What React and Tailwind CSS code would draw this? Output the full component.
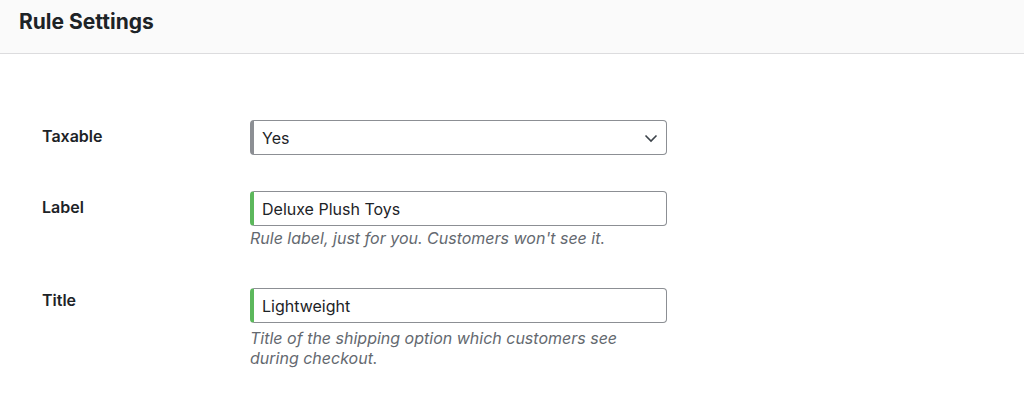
const font = { fontFamily: "Inter, 'Noto Sans', sans-serif" };

function Row({ label, labelPad, children }) {
  return (
    <div className="flex">
      <div className={`w-[208px] shrink-0 text-[16px] leading-6 font-semibold text-[#1d2327] ${labelPad}`}>
        {label}
      </div>
      <div className="w-[417px]">{children}</div>
    </div>
  );
}

function TextInput({ value }) {
  return (
    <div className="h-[35px] flex items-center rounded-[4px] border border-[#8c8f94] border-l-4 border-l-[#5cb85c] bg-white pl-2 text-[16px] text-[#1d2327]">
      {value}
    </div>
  );
}

export default function App() {
  return (
    <div className="w-[1024px] h-[419px] bg-white overflow-hidden" style={font}>
      <div className="h-[54px] bg-[#fafafa] border-b border-[#dcdcde] pl-[19px] pt-[8px]">
        <h2 className="text-[21px] leading-7 font-bold text-[#1d2327]">Rule Settings</h2>
      </div>

      <div className="pl-[42px] pt-[66px]">
        <Row label="Taxable" labelPad="pt-[4px]">
          <div className="h-[35px] flex items-center justify-between rounded-[4px] border border-[#8c8f94] border-l-4 border-l-[#8c8f94] bg-white pl-2 pr-[8px] text-[16px] text-[#1d2327]">
            <span>Yes</span>
            <svg width="14" height="14" viewBox="0 0 14 14" fill="none" stroke="#3c434a" strokeWidth="1.6">
              <path d="M1.5 4.5l5.5 5.5 5.5-5.5" />
            </svg>
          </div>
        </Row>

        <div className="mt-[36px]">
          <Row label="Label" labelPad="pt-[4px]">
            <TextInput value="Deluxe Plush Toys" />
            <p className="mt-[2px] text-[16px] leading-5 italic text-[#646970]">
              Rule label, just for you. Customers won't see it.
            </p>
          </Row>
        </div>

        <div className="mt-[40px]">
          <Row label="Title" labelPad="pt-0">
            <TextInput value="Lightweight" />
            <p className="mt-[5px] text-[16px] leading-5 italic text-[#646970]">
              Title of the shipping option which customers see during checkout.
            </p>
          </Row>
        </div>
      </div>
    </div>
  );
}
